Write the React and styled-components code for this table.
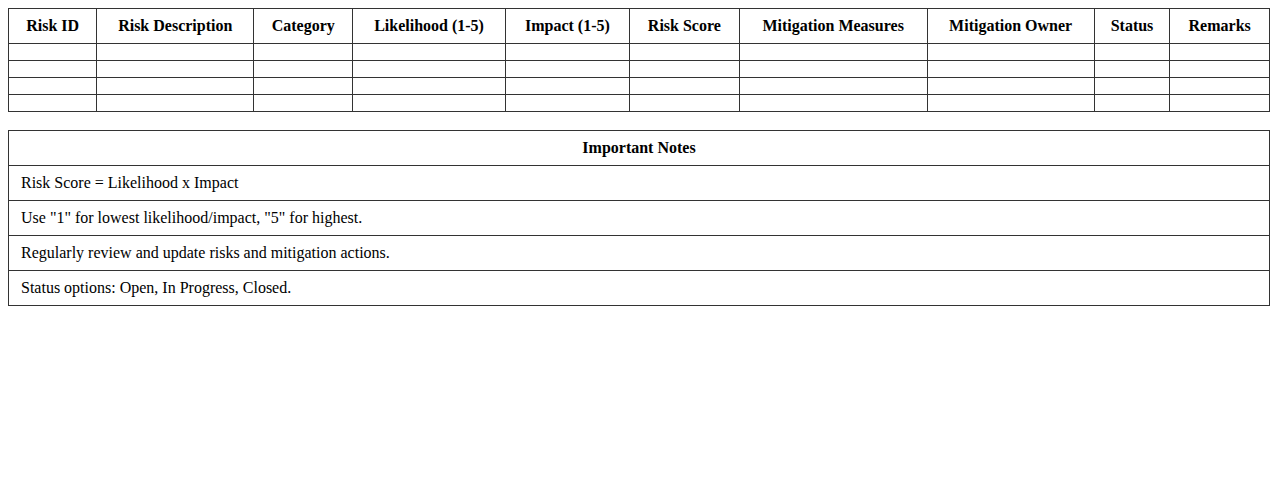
import styled, { createGlobalStyle } from 'styled-components'

const GlobalStyle = createGlobalStyle`
  body {
    margin: 8px;
    background: #fff;
    font-family: "Liberation Serif", "Times New Roman", serif;
    font-size: 16px;
    color: #000;
  }
`

const Table = styled.table`
  width: 100%;
  border-collapse: collapse;
  margin-bottom: ${props => props.$gap || '0'};
`

const HeadCell = styled.th`
  border: 1px solid #333;
  padding: 8px;
  font-weight: bold;
  text-align: center;
  white-space: nowrap;
  width: ${props => props.$w || 'auto'};
`

const Cell = styled.td`
  border: 1px solid #333;
  padding: 8px;
`

const NoteCell = styled.td`
  border: 1px solid #333;
  padding: 8px 12px;
  text-align: left;
`

const columns = [
  ['Risk ID', '7%'],
  ['Risk Description', '12.45%'],
  ['Category', '7.85%'],
  ['Likelihood (1-5)', '12.1%'],
  ['Impact (1-5)', '9.85%'],
  ['Risk Score', '8.7%'],
  ['Mitigation Measures', '14.9%'],
  ['Mitigation Owner', '13.25%'],
  ['Status', '6%'],
  ['Remarks', '7.9%'],
]

const notes = [
  'Risk Score = Likelihood x Impact',
  'Use "1" for lowest likelihood/impact, "5" for highest.',
  'Regularly review and update risks and mitigation actions.',
  'Status options: Open, In Progress, Closed.',
]

const App = () => {
  return (
    <>
      <GlobalStyle />
      <Table $gap="18px">
        <thead>
          <tr>
            {columns.map(([label, w]) => (
              <HeadCell key={label} $w={w}>{label}</HeadCell>
            ))}
          </tr>
        </thead>
        <tbody>
          {[0, 1, 2, 3].map(row => (
            <tr key={row}>
              {columns.map(([label]) => (
                <Cell key={label} />
              ))}
            </tr>
          ))}
        </tbody>
      </Table>
      <Table>
        <thead>
          <tr>
            <HeadCell>Important Notes</HeadCell>
          </tr>
        </thead>
        <tbody>
          {notes.map(note => (
            <tr key={note}>
              <NoteCell>{note}</NoteCell>
            </tr>
          ))}
        </tbody>
      </Table>
    </>
  )
}

export default App
